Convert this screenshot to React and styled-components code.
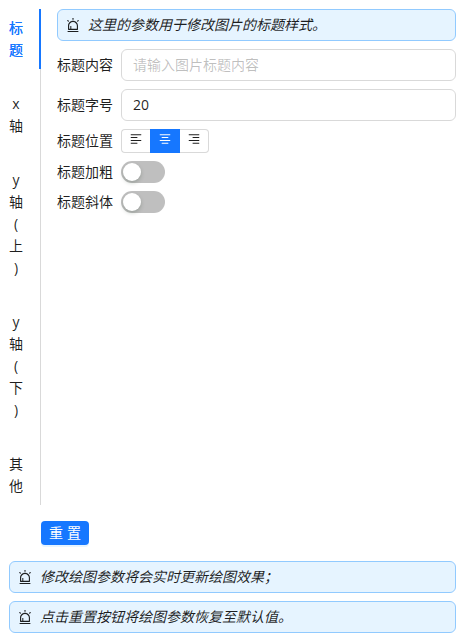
import { useState } from "react";
import styled, { createGlobalStyle } from "styled-components";
import { AiOutlineAlert } from "react-icons/ai";

const GlobalStyle = createGlobalStyle`
  *, *::before, *::after {
    box-sizing: border-box;
  }
  body {
    margin: 0;
    background: #fff;
    color: rgba(0, 0, 0, 0.88);
    font-family: "Open Sans", "Noto Sans CJK SC", sans-serif;
    font-size: 14px;
    line-height: 22px;
  }
  button, input {
    font-family: inherit;
    font-size: inherit;
    color: inherit;
  }
`;

const Page = styled.main`
  display: flex;
  flex-direction: column;
  width: 464px;
  height: 642px;
  padding: 9px 8px 9px 9px;
`;

const Panel = styled.section`
  display: flex;
  height: 496px;
`;

const TabList = styled.nav`
  display: flex;
  flex-direction: column;
  gap: 16px;
  width: 32px;
  flex: none;
  box-shadow: inset -1px 0 0 #d9d9d9;
`;

const Tab = styled.button`
  display: flex;
  flex-direction: column;
  align-items: center;
  width: 32px;
  padding: 8px 18px 8px 0;
  border: none;
  background: none;
  line-height: 22px;
  cursor: pointer;
  color: ${({ $active }) => ($active ? "#1677ff" : "inherit")};
  box-shadow: ${({ $active }) => ($active ? "inset -2px 0 0 #1677ff" : "none")};
  text-shadow: ${({ $active }) => ($active ? "0 0 0.25px currentColor" : "none")};
  span {
    display: block;
    height: 22px;
  }
`;

const Form = styled.div`
  display: flex;
  flex-direction: column;
  flex: 1;
  gap: 8px;
  padding-left: 16px;
`;

const Notice = styled.div`
  display: flex;
  align-items: center;
  gap: 8px;
  height: 32px;
  flex: none;
  padding: 0 8px;
  border: 1px solid #91caff;
  border-radius: 6px;
  background: #e6f4ff;
  font-style: italic;
  svg {
    flex: none;
  }
`;

const Row = styled.div`
  display: flex;
  align-items: center;
  gap: 8px;
`;

const Label = styled.label`
  width: 56px;
  flex: none;
  line-height: 22px;
`;

const Input = styled.input`
  flex: 1;
  min-width: 0;
  height: 32px;
  padding: 3px 11px 5px;
  border: 1px solid #d9d9d9;
  border-radius: 6px;
  outline: none;
  background: #fff;
  &::placeholder {
    color: rgba(0, 0, 0, 0.25);
    opacity: 1;
  }
`;

const AlignGroup = styled.div`
  display: flex;
  height: 24px;
`;

const AlignButton = styled.button`
  display: flex;
  justify-content: center;
  align-items: flex-start;
  width: ${({ $active }) => ($active ? "30px" : "29px")};
  padding: 3px 0 0;
  border: 1px solid ${({ $active }) => ($active ? "#1677ff" : "#d9d9d9")};
  background: ${({ $active }) => ($active ? "#1677ff" : "#fff")};
  color: ${({ $active }) => ($active ? "#fff" : "inherit")};
  cursor: pointer;
  &:first-child {
    border-right: none;
    border-radius: 4px 0 0 4px;
  }
  &:last-child {
    border-left: none;
    border-radius: 0 4px 4px 0;
  }
`;

const Switch = styled.button`
  width: 44px;
  height: 22px;
  padding: 2px;
  border: none;
  border-radius: 11px;
  background: ${({ $on }) => ($on ? "#1677ff" : "#bfbfbf")};
  cursor: pointer;
  &::before {
    content: "";
    display: block;
    width: 18px;
    height: 18px;
    margin-left: ${({ $on }) => ($on ? "22px" : "0")};
    border-radius: 50%;
    background: #fff;
    box-shadow: 0 2px 4px rgba(0, 35, 11, 0.2);
  }
`;

const ResetButton = styled.button`
  width: 48px;
  height: 24px;
  flex: none;
  margin: 16px 0 16px 32px;
  padding: 0 4px 0 8px;
  border: none;
  border-radius: 4px;
  background: #1677ff;
  box-shadow: 0 2px 0 rgba(5, 145, 255, 0.1);
  color: #fff;
  letter-spacing: 4px;
  line-height: 24px;
  white-space: nowrap;
  cursor: pointer;
`;

const Notes = styled.footer`
  display: flex;
  flex-direction: column;
  gap: 8px;
`;

const tabs = ["标题", "x轴", "y轴(上)", "y轴(下)", "其他"];

// x offset of the short lines
const aligns = { left: 120, center: 264, right: 408 };

const AlignIcon = ({ offset }) => (
  <svg width="12" height="12" viewBox="64 64 896 896" fill="currentColor">
    <rect x="120" y="158" width="784" height="72" rx="8" />
    <rect x={offset} y="370" width="496" height="72" rx="8" />
    <rect x="120" y="582" width="784" height="72" rx="8" />
    <rect x={offset} y="794" width="496" height="72" rx="8" />
  </svg>
);

const Hint = ({ children }) => (
  <Notice>
    <AiOutlineAlert size={14} viewBox="64 64 896 896" />
    <span>{children}</span>
  </Notice>
);

const App = () => {
  const [tab, setTab] = useState("标题");
  const [title, setTitle] = useState("");
  const [size, setSize] = useState("20");
  const [align, setAlign] = useState("center");
  const [bold, setBold] = useState(false);
  const [italic, setItalic] = useState(false);

  const reset = () => {
    setTitle("");
    setSize("20");
    setAlign("center");
    setBold(false);
    setItalic(false);
  };

  return (
    <Page>
      <GlobalStyle />
      <Panel>
        <TabList>
          {tabs.map((name) => (
            <Tab key={name} $active={name === tab} onClick={() => setTab(name)}>
              {[...name].map((char) => (
                <span key={char}>{char}</span>
              ))}
            </Tab>
          ))}
        </TabList>
        <Form>
          <Hint>这里的参数用于修改图片的标题样式。</Hint>
          <Row>
            <Label>标题内容</Label>
            <Input
              value={title}
              placeholder="请输入图片标题内容"
              onChange={(e) => setTitle(e.target.value)}
            />
          </Row>
          <Row>
            <Label>标题字号</Label>
            <Input value={size} onChange={(e) => setSize(e.target.value)} />
          </Row>
          <Row>
            <Label>标题位置</Label>
            <AlignGroup>
              {Object.entries(aligns).map(([key, offset]) => (
                <AlignButton key={key} $active={key === align} onClick={() => setAlign(key)}>
                  <AlignIcon offset={offset} />
                </AlignButton>
              ))}
            </AlignGroup>
          </Row>
          <Row>
            <Label>标题加粗</Label>
            <Switch $on={bold} onClick={() => setBold(!bold)} />
          </Row>
          <Row>
            <Label>标题斜体</Label>
            <Switch $on={italic} onClick={() => setItalic(!italic)} />
          </Row>
        </Form>
      </Panel>
      <ResetButton onClick={reset}>重置</ResetButton>
      <Notes>
        <Hint>修改绘图参数将会实时更新绘图效果；</Hint>
        <Hint>点击重置按钮将绘图参数恢复至默认值。</Hint>
      </Notes>
    </Page>
  );
};

export default App;
